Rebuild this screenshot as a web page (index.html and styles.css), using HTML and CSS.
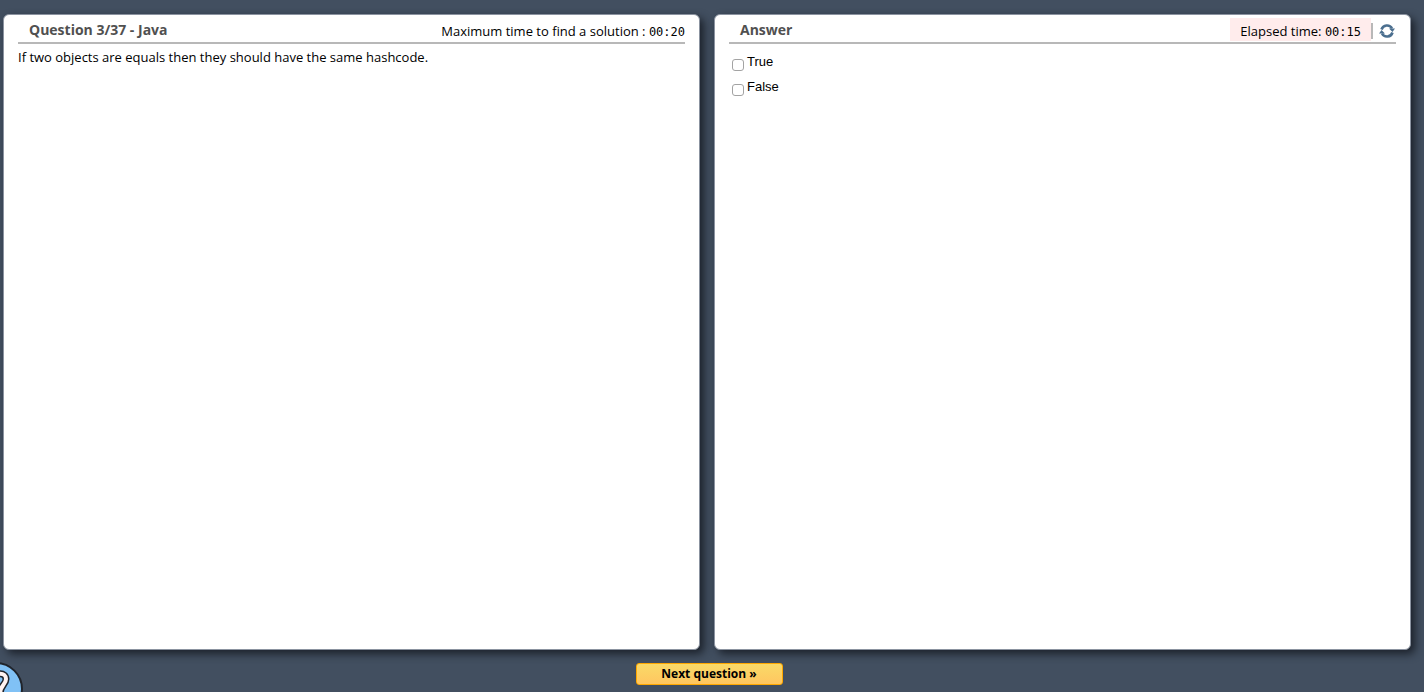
FILE: index.html
```html
<!DOCTYPE html>
<html lang="en">
<head>
<meta charset="utf-8">
<title>Question 3/37 - Java</title>
<link rel="stylesheet" href="styles.css">
</head>
<body>
<form class="quiz">
  <main class="panels">
    <section class="panel">
      <header class="panel-head">
        <h2 class="title">Question 3/37 - Java</h2>
        <p class="timer">Maximum time to find a solution : <span class="clock">00:20</span></p>
      </header>
      <p class="question">If two objects are equals then they should have the same hashcode.</p>
    </section>
    <section class="panel">
      <header class="panel-head">
        <h2 class="title">Answer</h2>
        <div class="tools">
          <p class="timer elapsed">Elapsed time: <span class="clock">00:15</span></p>
          <button class="refresh" type="button" aria-label="Refresh">
            <svg width="16" height="16" viewBox="0 0 16 16" fill="none" stroke="#4b6f8f" stroke-width="2.600">
              <path d="M2.500 6.500A5.700 5.700 0 0 1 13 5.500M13.500 9.500A5.700 5.700 0 0 1 3 10.500"/>
              <path d="M10 5.500H16L13.500 9ZM6 10.500H0L2.500 7Z" fill="#4b6f8f" stroke="none"/>
            </svg>
          </button>
        </div>
      </header>
      <div class="options">
        <div class="option"><input class="check" type="checkbox" id="opt-true"><label for="opt-true">True</label></div>
        <div class="option"><input class="check" type="checkbox" id="opt-false"><label for="opt-false">False</label></div>
      </div>
    </section>
  </main>
  <footer class="actions">
    <button class="next" type="submit">Next question »</button>
  </footer>
</form>
<button class="help" type="button" aria-label="Help">
  <svg width="54" height="54" viewBox="0 0 54 54">
    <circle cx="27" cy="27" r="26" fill="#80c1f5" stroke="#20242b" stroke-width="2"/>
    <path d="M25 17C26 10 37 10 37 17C37 23 31 23 31 32" fill="none" stroke="#20242b" stroke-width="7" stroke-linecap="round"/>
    <path d="M25 17C26 10 37 10 37 17C37 23 31 23 31 32" fill="none" stroke="#fff3f0" stroke-width="4" stroke-linecap="round"/>
    <circle cx="31" cy="41" r="3" fill="#fff3f0" stroke="#20242b" stroke-width="2"/>
  </svg>
</button>
</body>
</html>
```
FILE: styles.css
```css
* { box-sizing: border-box; }

body {
  margin: 0;
  background: #424f60;
  color: #000;
  font: 13px/18px "Open Sans", "Noto Sans", sans-serif;
}

h2, p { margin: 0; }

button {
  font: inherit;
  cursor: pointer;
}

.quiz {
  display: flex;
  flex-direction: column;
  height: 100vh;
  padding: 14px 13px 7px 3px;
}

.panels {
  display: grid;
  grid-template-columns: 1fr 1fr;
  gap: 14px;
  flex: 1;
}

.panel {
  padding: 3px 14px;
  background: #fff;
  border: 1px solid #8b93a0;
  border-radius: 6px;
  box-shadow: 4px 4px 8px #1c222b;
}

.panel-head {
  display: flex;
  justify-content: space-between;
  height: 26px;
  border-bottom: 2px solid #b8b8b8;
}

.title {
  padding-left: 11px;
  color: #505050;
  font: bold 14px/23px "Open Sans", sans-serif;
}

.timer {
  font-size: 13px;
  line-height: 26px;
}

.clock {
  font: 12px "DejaVu Sans Mono", monospace;
}

.tools {
  display: flex;
  align-items: flex-start;
}

.elapsed {
  height: 23px;
  padding: 0 10px;
  background: #ffecec;
}

.refresh {
  display: flex;
  height: 16px;
  margin-top: 5px;
  padding: 0 1px 0 6px;
  border: 0;
  border-left: 2px solid #b8b8b8;
  background: none;
}

.question { padding-top: 4px; }

.options {
  padding: 8px 3px;
  font: 13px/20px "Liberation Sans", Arial, sans-serif;
}

.option {
  display: flex;
  gap: 3px;
  height: 25px;
}

.check {
  appearance: none;
  width: 12px;
  height: 12px;
  margin: 7px 0 0;
  border: 1px solid #a3a3a3;
  border-radius: 3px;
  background: #fff;
}

.check:checked { background: #4b6f8f; }

.actions {
  display: flex;
  justify-content: center;
  padding: 13px 0 0 4px;
}

.next {
  width: 147px;
  height: 22px;
  padding: 0;
  border: 1px solid #ffa800;
  border-radius: 3px;
  background: linear-gradient(#f9da68, #ffc660);
  font: bold 12px/18px "Open Sans", "Noto Sans", sans-serif;
}

.help {
  position: fixed;
  left: -31px;
  bottom: -24px;
  display: flex;
  padding: 0;
  border: 0;
  background: none;
}
```
